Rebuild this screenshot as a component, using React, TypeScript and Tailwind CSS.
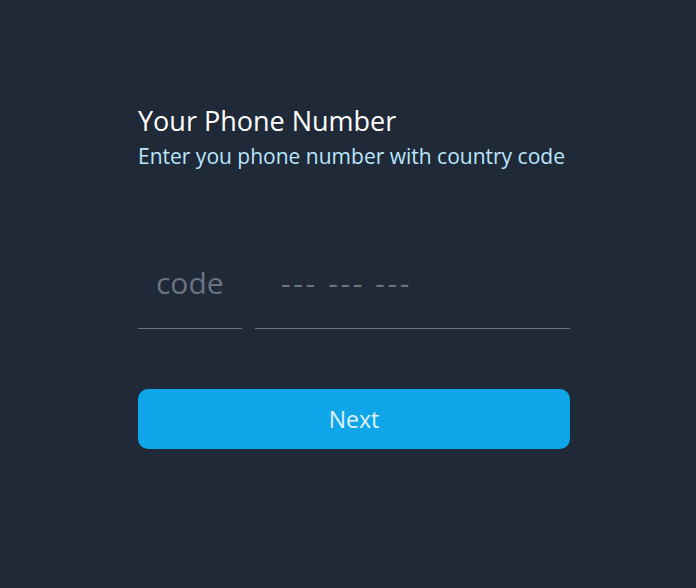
import React from "react";

export default function App() {
  return (
    <div className="min-h-[588px] w-full bg-[#1f2937] pt-[103px] font-['Open_Sans',sans-serif]">
      <div className="ml-[138px] w-[432px] flex flex-col">
        <h1 className="text-[27px] leading-[36px] text-white">Your Phone Number</h1>
        <p className="mt-[3px] text-[21px] leading-[28px] text-[#bae6fd]">Enter you phone number with country code</p>
        <div className="mt-[71px] flex gap-[13px]">
          <input
            className="w-[104px] min-w-0 h-[88px] bg-transparent border-b border-[#6b7280] pl-[18px] pb-[4px] text-[30px] text-gray-300 placeholder:text-[#6b7280] outline-none"
            placeholder="code"
          />
          <input
            className="flex-1 min-w-0 h-[88px] bg-transparent border-b border-[#6b7280] pl-[26px] pb-[4px] text-[30px] tracking-[2.6px] text-gray-300 placeholder:text-[#6b7280] outline-none"
            placeholder="--- --- ---"
          />
        </div>
        <button className="mt-[60px] h-[60px] w-full rounded-[10px] bg-[#0ea5e9] text-[23px] text-[#e0f2fe]">
          Next
        </button>
      </div>
    </div>
  );
}
